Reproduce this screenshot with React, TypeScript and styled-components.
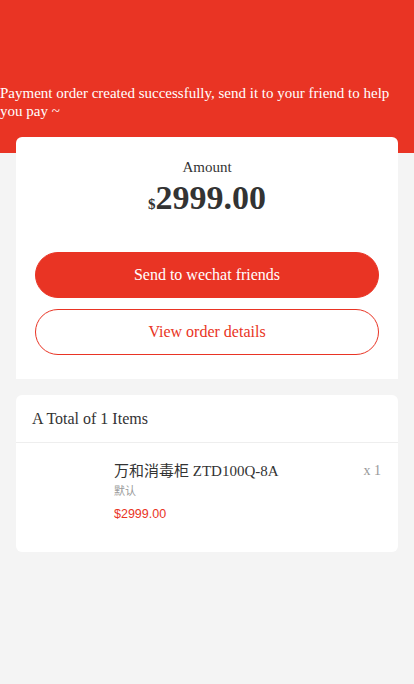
import styled, { createGlobalStyle } from "styled-components";

const GlobalStyle = createGlobalStyle`
  html, body {
    margin: 0;
    padding: 0;
    background: #f4f4f4;
    font-family: "Liberation Serif", "Noto Sans CJK SC", serif;
    color: #333;
  }
`;

const RED = "#e93424";

const order = {
  amount: "2999.00",
  items: [
    {
      id: 1,
      name: "万和消毒柜 ZTD100Q-8A",
      spec: "默认",
      price: "$2999.00",
      qty: 1,
    },
  ],
};

export default function App() {
  return (
    <Page>
      <GlobalStyle />
      <Banner>
        Payment order created successfully, send it to your friend to help you
        pay ~
      </Banner>
      <AmountCard>
        <AmountLabel>Amount</AmountLabel>
        <AmountValue>
          <Currency>$</Currency>
          {order.amount}
        </AmountValue>
        <Actions>
          <Button $primary>Send to wechat friends</Button>
          <Button>View order details</Button>
        </Actions>
      </AmountCard>
      <ItemsCard>
        <ItemsHeader>A Total of {order.items.length} Items</ItemsHeader>
        {order.items.map((item) => (
          <ItemRow key={item.id}>
            <Thumb />
            <ItemInfo>
              <ItemName>{item.name}</ItemName>
              <ItemSpec>{item.spec}</ItemSpec>
              <ItemPrice>{item.price}</ItemPrice>
            </ItemInfo>
            <ItemQty>x {item.qty}</ItemQty>
          </ItemRow>
        ))}
      </ItemsCard>
    </Page>
  );
}

const Page = styled.div`
  min-height: 684px;
  padding-bottom: 24px;
  box-sizing: border-box;
`;

const Banner = styled.div`
  height: 153px;
  box-sizing: border-box;
  padding-top: 84px;
  background: ${RED};
  color: #fff;
  font-size: 15px;
  line-height: 18px;
`;

const AmountCard = styled.section`
  position: relative;
  margin: -16px 16px 0;
  padding: 21px 19px 24px;
  background: #fff;
  border-radius: 6px 6px 0 0;
  text-align: center;
`;

const AmountLabel = styled.div`
  font-size: 15px;
  line-height: 18px;
`;

const AmountValue = styled.div`
  margin-top: 2px;
  font-size: 34px;
  font-weight: bold;
  line-height: 39px;
  color: #333;
`;

const Currency = styled.span`
  font-size: 15px;
  font-weight: bold;
`;

const Actions = styled.div`
  display: flex;
  flex-direction: column;
  gap: 11px;
  margin-top: 28px;
`;

const Button = styled.button<{ $primary?: boolean }>`
  height: 46px;
  border-radius: 23px;
  border: 1px solid ${RED};
  background: ${(p) => (p.$primary ? RED : "#fff")};
  color: ${(p) => (p.$primary ? "#fff" : RED)};
  font-family: "Liberation Serif", serif;
  font-size: 16px;
  cursor: pointer;
`;

const ItemsCard = styled.section`
  margin: 16px 16px 0;
  background: #fff;
  border-radius: 6px;
  overflow: hidden;
`;

const ItemsHeader = styled.div`
  height: 47px;
  display: flex;
  align-items: center;
  padding: 0 16px;
  border-bottom: 1px solid #eee;
  font-size: 16px;
`;

const ItemRow = styled.div`
  display: flex;
  align-items: flex-start;
  padding: 17px 17px 20px 16px;
`;

const Thumb = styled.div`
  width: 72px;
  height: 72px;
  margin-right: 10px;
  flex-shrink: 0;
`;

const ItemInfo = styled.div`
  flex: 1;
  display: flex;
  flex-direction: column;
`;

const ItemName = styled.div`
  font-size: 15px;
  line-height: 22px;
  color: #333;
`;

const ItemSpec = styled.div`
  font-family: "Noto Sans CJK SC", sans-serif;
  font-size: 11px;
  line-height: 16px;
  color: #999;
`;

const ItemPrice = styled.div`
  margin-top: 8px;
  font-family: "Liberation Sans", sans-serif;
  font-size: 12.5px;
  line-height: 16px;
  color: ${RED};
`;

const ItemQty = styled.div`
  font-size: 14px;
  line-height: 22px;
  color: #999;
`;
